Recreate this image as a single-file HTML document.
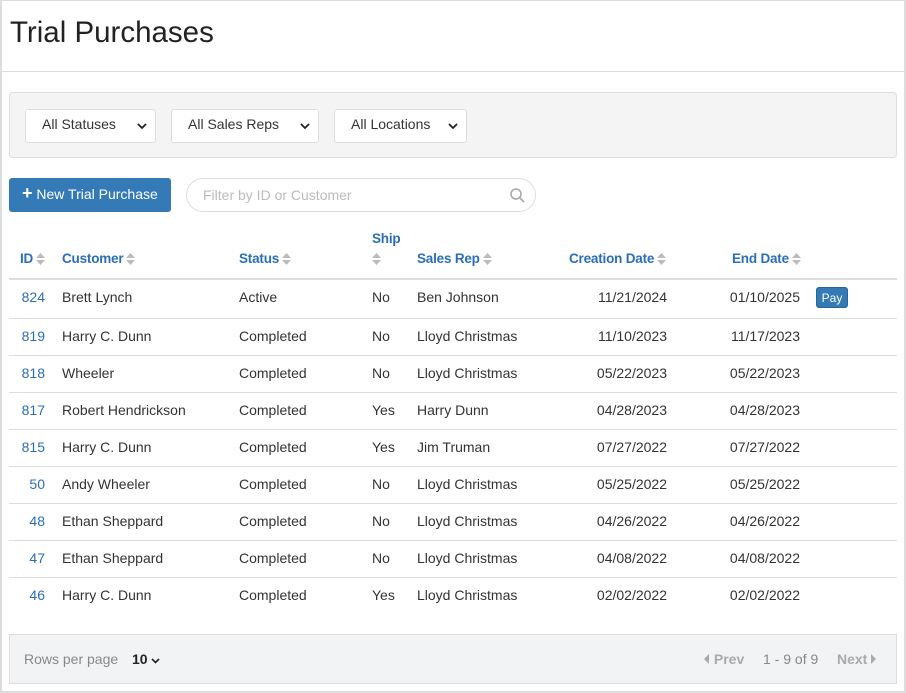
<!DOCTYPE html>
<html><head><meta charset="utf-8"><style>
*{box-sizing:border-box;margin:0;padding:0}
body{width:906px;height:693px;background:#fff;font-family:"Liberation Sans",Arial,sans-serif;position:relative;overflow:hidden;color:#333}
.frame{position:absolute;left:0;top:0;width:906px;height:693px;border:2px solid #ddd;border-top:1px solid #ddd}
.abs{position:absolute}
h1{position:absolute;left:10px;top:16px;font-size:29.5px;font-weight:normal;color:#222}
.hr{position:absolute;left:2px;right:2px;top:71px;border-top:1px solid #ddd}
.filters{position:absolute;left:9px;top:92px;width:888px;height:66px;background:#f4f4f4;border:1px solid #ddd;border-radius:4px}
.sel{position:absolute;top:16px;height:34px;background:#fff;border:1px solid #ddd;border-radius:3px;font-size:14px;padding:6px 0 0 16px;color:#333}
.sel svg{position:absolute;right:8px;top:13px}
.btn{position:absolute;left:9px;top:178px;width:162px;height:34px;background:#337ab7;border-radius:3px;color:#fff;font-size:14px;padding:8px 0 0 13px}
.search{position:absolute;left:186px;top:178px;width:350px;height:34px;border:1px solid #ddd;border-radius:17px;color:#bbb;font-size:14px;padding:8px 0 0 16px}
.th{position:absolute;font-size:13.5px;font-weight:bold;color:#2a6ebb;top:251px;letter-spacing:-0.2px}
.sort{display:inline-block;vertical-align:middle;margin-left:3px}
.line{position:absolute;left:9px;width:888px;border-top:1px solid #ddd}
.td{position:absolute;font-size:14px;color:#333}
.id{color:#2a6ebb;text-align:right;width:40px;left:5px}
.r{text-align:right}
.pay{position:absolute;left:816px;top:287px;width:32px;height:21px;background:#337ab7;border:1px solid #2a6496;border-radius:3px;color:#fff;font-size:12px;text-align:center;padding-top:3px}
.foot{position:absolute;left:9px;top:634px;width:888px;height:50px;background:#f2f3f5;border:1px solid #ddd;font-size:14px;color:#888}
</style></head><body>
<div class="frame"></div>
<h1>Trial Purchases</h1>
<div class="hr"></div>
<div class="filters">
<div class="sel" style="left:15px;width:131px">All Statuses<svg width="10" height="7"><path d="M1 1l4 4 4-4" stroke="#222" stroke-width="1.8" fill="none"/></svg></div>
<div class="sel" style="left:161px;width:148px">All Sales Reps<svg width="10" height="7"><path d="M1 1l4 4 4-4" stroke="#222" stroke-width="1.8" fill="none"/></svg></div>
<div class="sel" style="left:324px;width:133px">All Locations<svg width="10" height="7"><path d="M1 1l4 4 4-4" stroke="#222" stroke-width="1.8" fill="none"/></svg></div>
</div>
<div class="btn"><b style="font-size:18px;line-height:14px">+</b> New Trial Purchase</div>
<div class="search">Filter by ID or Customer<svg style="position:absolute;right:10px;top:9px" width="15" height="15"><circle cx="6" cy="6" r="5" stroke="#aaa" stroke-width="1.6" fill="none"/><path d="M10 10l4 4" stroke="#aaa" stroke-width="1.8"/></svg></div>

<div class="th" style="left:20px">ID<svg class="sort" width="9" height="12"><path d="M0 5l4.5-5 4.5 5zM0 7l4.5 5 4.5-5z" fill="#bbb"/></svg></div>
<div class="th" style="left:62px">Customer<svg class="sort" width="9" height="12"><path d="M0 5l4.5-5 4.5 5zM0 7l4.5 5 4.5-5z" fill="#bbb"/></svg></div>
<div class="th" style="left:239px">Status<svg class="sort" width="9" height="12"><path d="M0 5l4.5-5 4.5 5zM0 7l4.5 5 4.5-5z" fill="#bbb"/></svg></div>
<div class="th" style="left:372px;top:231px">Ship</div>
<svg class="abs" style="left:372px;top:253px" width="9" height="12"><path d="M0 5l4.5-5 4.5 5zM0 7l4.5 5 4.5-5z" fill="#bbb"/></svg>
<div class="th" style="left:417px">Sales Rep<svg class="sort" width="9" height="12"><path d="M0 5l4.5-5 4.5 5zM0 7l4.5 5 4.5-5z" fill="#bbb"/></svg></div>
<div class="th" style="left:569px">Creation Date<svg class="sort" width="9" height="12"><path d="M0 5l4.5-5 4.5 5zM0 7l4.5 5 4.5-5z" fill="#bbb"/></svg></div>
<div class="th" style="left:732px">End Date<svg class="sort" width="9" height="12"><path d="M0 5l4.5-5 4.5 5zM0 7l4.5 5 4.5-5z" fill="#bbb"/></svg></div>
<div class="line" style="top:278px;border-top:2px solid #ddd"></div>

<div id="rows"></div>
<div class="pay">Pay</div>

<div class="foot">
<span class="abs" style="left:14px;top:16px">Rows per page</span>
<span class="abs" style="left:122px;top:16px;color:#222;font-weight:bold">10 <svg width="9" height="6"><path d="M1 1l3.5 3.5 3.5-3.5" stroke="#222" stroke-width="1.6" fill="none"/></svg></span>
<span class="abs" style="left:694px;top:16px;font-weight:bold;color:#aaa"><svg width="6" height="10"><path d="M5 0L0 5l5 5z" fill="#aaa"/></svg> Prev</span>
<span class="abs" style="left:753px;top:16px">1 - 9 of 9</span>
<span class="abs" style="left:827px;top:16px;font-weight:bold;color:#aaa">Next <svg width="6" height="10"><path d="M0 0l5 5-5 5z" fill="#aaa"/></svg></span>
</div>

<script>
var d=[["824","Brett Lynch","Active","No","Ben Johnson","11/21/2024","01/10/2025"],
["819","Harry C. Dunn","Completed","No","Lloyd Christmas","11/10/2023","11/17/2023"],
["818","Wheeler","Completed","No","Lloyd Christmas","05/22/2023","05/22/2023"],
["817","Robert Hendrickson","Completed","Yes","Harry Dunn","04/28/2023","04/28/2023"],
["815","Harry C. Dunn","Completed","Yes","Jim Truman","07/27/2022","07/27/2022"],
["50","Andy Wheeler","Completed","No","Lloyd Christmas","05/25/2022","05/25/2022"],
["48","Ethan Sheppard","Completed","No","Lloyd Christmas","04/26/2022","04/26/2022"],
["47","Ethan Sheppard","Completed","No","Lloyd Christmas","04/08/2022","04/08/2022"],
["46","Harry C. Dunn","Completed","Yes","Lloyd Christmas","02/02/2022","02/02/2022"]];
var h="";
d.forEach(function(r,i){var t=i==0?289:328+(i-1)*37;
h+='<div class="td id" style="top:'+t+'px">'+r[0]+'</div>'+
'<div class="td" style="left:62px;top:'+t+'px">'+r[1]+'</div>'+
'<div class="td" style="left:239px;top:'+t+'px">'+r[2]+'</div>'+
'<div class="td" style="left:372px;top:'+t+'px">'+r[3]+'</div>'+
'<div class="td" style="left:417px;top:'+t+'px">'+r[4]+'</div>'+
'<div class="td r" style="left:567px;width:100px;top:'+t+'px">'+r[5]+'</div>'+
'<div class="td r" style="left:700px;width:100px;top:'+t+'px">'+r[6]+'</div>';
if(i<8)h+='<div class="line" style="top:'+(318+i*37)+'px"></div>';});
document.getElementById("rows").innerHTML=h;
</script>
</body></html>
